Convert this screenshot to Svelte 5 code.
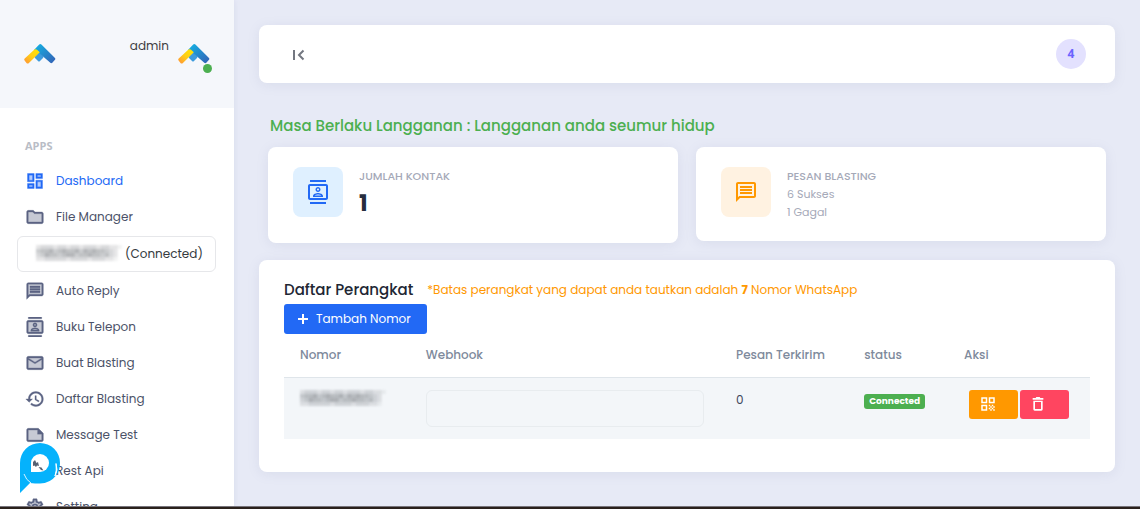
<script>
  const icons = {
    dashboard: {
      soft: 'M5 5h4v6H5zm10 8h4v6h-4zM5 17h4v2H5zM15 5h4v2h-4z',
      line: 'M3 13h8V3H3v10zm2-8h4v6H5V5zM3 21h8v-6H3v6zm2-4h4v2H5v-2zM13 21h8V11h-8v10zm2-8h4v6h-4v-6zM13 3v6h8V3h-8zm6 4h-4V5h4v2z'
    },
    folder: {
      soft: 'M11.17 8l-2-2H4v12h16V8z',
      line: 'M20 6h-8l-2-2H4c-1.1 0-2 .9-2 2v12c0 1.1.9 2 2 2h16c1.1 0 2-.9 2-2V8c0-1.1-.9-2-2-2zm0 12H4V6h5.17l2 2H20v10z'
    },
    chat: {
      soft: 'M4 17.17L5.17 16H20V4H4v13.17z',
      line: 'M20 2H4c-1.1 0-2 .9-2 2v18l4-4h14c1.1 0 2-.9 2-2V4c0-1.1-.9-2-2-2zm0 14H5.17L4 17.17V4h16v12zM6 12h12v2H6zm0-3h12v2H6zm0-3h12v2H6z'
    },
    contacts: {
      soft: 'M4 6v12h16V6z',
      line: 'M20 4H4c-1.1 0-2 .9-2 2v12c0 1.1.9 2 2 2h16c1.1 0 2-.9 2-2V6c0-1.1-.9-2-2-2zm0 14H4V6h16v12zM4 0h16v2H4zm0 22h16v2H4zm8-10c1.38 0 2.5-1.12 2.5-2.5S13.38 7 12 7 9.500 8.120 9.500 9.500 10.620 12 12 12zm0-3.500c.55 0 1 .45 1 1s-.45 1-1 1-1-.45-1-1 .45-1 1-1zm5 7.490C17 13.900 13.690 13 12 13s-5 .9-5 2.990V17h10v-1.010zm-8.190-.490c.61-.52 2.030-1 3.190-1 1.170 0 2.590.48 3.200 1H8.810z'
    },
    mail: {
      soft: 'M20 8l-8 5-8-5v10h16zm0-2H4l8 4.990z',
      line: 'M22 6c0-1.1-.9-2-2-2H4c-1.1 0-2 .9-2 2v12c0 1.1.9 2 2 2h16c1.1 0 2-.9 2-2V6zm-2 0l-8 5-8-5h16zm0 12H4V8l8 5 8-5v10z'
    },
    history: {
      soft: '',
      line: 'M13 3c-4.970 0-9 4.030-9 9H1l3.890 3.890.07.14L9 12H6c0-3.870 3.130-7 7-7s7 3.130 7 7-3.130 7-7 7c-1.930 0-3.680-.79-4.940-2.060l-1.420 1.420C8.270 19.990 10.510 21 13 21c4.970 0 9-4.030 9-9s-4.030-9-9-9zm-1 5v5l4.250 2.520.77-1.280-3.520-2.090V8z'
    },
    note: {
      soft: 'M15 6H4v12h16v-7h-5z',
      line: 'M4 4c-1.100 0-2 .9-2 2v12.010c0 1.100.9 1.990 2 1.990h16c1.100 0 2-.9 2-2v-8l-6-6H4zm16 14H4V6h11v5h5v7z'
    },
    gear: {
      soft: 'M19.280 8.600l-.7-1.210-2.500 1.020-2.100-1.200L13.400 4h-2.800l-.5 3.210-2.100 1.200-2.600-1.020L4.700 8.600l2 1.600v3.600l-2 1.600.7 1.210 2.600-1.020 2.100 1.200.5 3.210h2.800l.5-3.210 2.100-1.200 2.600 1.020.7-1.210-2-1.600v-3.600zM12 16a4 4 0 110-8 4 4 0 010 8z',
      line: 'M19.430 12.980c.04-.32.07-.64.07-.98s-.03-.66-.07-.98l2.110-1.650c.19-.15.24-.42.12-.64l-2-3.460c-.12-.22-.39-.3-.61-.22l-2.490 1c-.52-.4-1.080-.73-1.690-.98l-.38-2.650C14.460 2.180 14.250 2 14 2h-4c-.25 0-.46.18-.49.42l-.38 2.650c-.61.25-1.170.59-1.690.98l-2.490-1c-.23-.09-.49 0-.61.22l-2 3.460c-.13.22-.07.49.12.64l2.110 1.650c-.04.32-.07.65-.07.98s.03.66.07.98l-2.110 1.650c-.19.15-.24.42-.12.64l2 3.460c.12.22.39.3.61.22l2.490-1c.52.4 1.080.73 1.690.98l.38 2.650c.03.24.24.42.49.42h4c.25 0 .46-.18.49-.42l.38-2.650c.61-.25 1.170-.59 1.690-.98l2.490 1c.23.09.49 0 .61-.22l2-3.460c.12-.22.07-.49-.12-.64l-2.110-1.650zm-1.980-1.710c.04.31.05.52.05.73s-.02.43-.05.73l-.14 1.130.89.7 1.080.84-.7 1.210-1.270-.51-1.040-.42-.9.68c-.43.32-.84.56-1.250.73l-1.060.43-.16 1.130-.2 1.350h-1.400l-.19-1.350-.16-1.130-1.060-.43c-.43-.18-.83-.41-1.230-.71l-.91-.7-1.060.43-1.270.51-.7-1.210 1.080-.84.89-.7-.14-1.130c-.03-.31-.05-.54-.05-.74s.02-.43.05-.73l.14-1.130-.89-.7-1.080-.84.7-1.210 1.270.51 1.040.42.9-.68c.43-.32.84-.56 1.250-.73l1.060-.43.16-1.130.2-1.350h1.390l.19 1.350.16 1.130 1.060.43c.43.18.83.41 1.230.71l.91.7 1.060-.43 1.270-.51.7 1.210-1.070.85-.89.7.14 1.130zM12 8a4 4 0 100 8 4 4 0 000-8zm0 6a2 2 0 110-4 2 2 0 010 4z'
    }
  };

  const top = [
    { label: 'Dashboard', icon: 'dashboard', active: true },
    { label: 'File Manager', icon: 'folder' }
  ];
  const rest = [
    { label: 'Auto Reply', icon: 'chat' },
    { label: 'Buku Telepon', icon: 'contacts' },
    { label: 'Buat Blasting', icon: 'mail' },
    { label: 'Daftar Blasting', icon: 'history' },
    { label: 'Message Test', icon: 'note' },
    { label: 'Rest Api', icon: 'folder' },
    { label: 'Setting', icon: 'gear' }
  ];

  // Tones of the tiles that mask a phone number, one row per string.
  const tones = ['23332332332333233221', '45564565564656554320', '34655456645565545320', '22333332333323332210'];
  const tiles = tones.flatMap((row, y) => [...row].map((v, x) => ({ x, y, o: Number(v) / 14 })));
</script>

{#snippet glyph(name, size)}
  <svg width={size} height={size} viewBox="0 0 24 24" fill="currentColor" aria-hidden="true">
    <path d={icons[name].soft} opacity="0.35" />
    <path d={icons[name].line} fill-rule="evenodd" stroke="currentColor" stroke-width="0.4" />
  </svg>
{/snippet}

{#snippet logo(id)}
  <svg width="32" height="22" viewBox="0 0 32 22" aria-hidden="true">
    <defs>
      <linearGradient id="{id}-b" x1="0" y1="0" x2="1" y2="1"><stop offset="0" stop-color="#12b5e5" /><stop offset="1" stop-color="#345fb4" /></linearGradient>
      <linearGradient id="{id}-y" x1="1" y1="0" x2="0" y2="1"><stop offset="0" stop-color="#ffe500" /><stop offset="0.5" stop-color="#ffd014" /><stop offset="1" stop-color="#ff9138" /></linearGradient>
    </defs>
    <path d="M11 13l4-4 4 4q1 1 0 2l-3 3q-1 1-2 0l-3-3q-1-1 0-2z" fill="#3d9bdd" />
    <path d="M10 7l5.200-5.600q1.100-1 2.200 0L31 15q.8 1 0 1.800l-2.700 3q-1 .8-2 0L14.500 9.500z" fill="url(#{id}-b)" />
    <path d="M.7 15.500L10.500 6.600q1.500-1 2.800.3l2.500 2.400L4.700 20.200q-1 .8-2 0L.6 17.600q-.8-1.200.1-2.100z" fill="url(#{id}-y)" />
  </svg>
{/snippet}

{#snippet masked()}
  <svg class="masked" width="86" height="16" viewBox="0 0 20 4" preserveAspectRatio="none" aria-hidden="true">
    {#each tiles as t}<rect x={t.x} y={t.y} width="1" height="1" fill="#4b5057" opacity={t.o} />{/each}
  </svg>
{/snippet}

{#snippet item(entry)}
  <a href="#top" class="item" class:active={entry.active}>{@render glyph(entry.icon, 20)}<span>{entry.label}</span></a>
{/snippet}

<div class="page">
  <div class="shell">
    <aside>
      <div class="profile">
        <a href="#top" class="brand" aria-label="Home">{@render logo('brand')}</a>
        <div class="user">
          <span>admin</span>
          <div class="avatar">{@render logo('avatar')}<i></i></div>
        </div>
      </div>
      <nav>
        <h2>APPS</h2>
        {#each top as entry}{@render item(entry)}{/each}
        <div class="device">
          {@render masked()}
          <select aria-label="Device"><option>(Connected)</option></select>
        </div>
        {#each rest as entry}{@render item(entry)}{/each}
      </nav>
    </aside>

    <main>
      <header class="card bar">
        <button class="collapse" aria-label="Toggle sidebar">
          <svg width="20" height="20" viewBox="0 0 20 20" fill="none" stroke="#737780" stroke-width="2" aria-hidden="true"><path d="M6 6v10M15.500 6.500L11 11l4.500 4.500" /></svg>
        </button>
        <span class="count">4</span>
      </header>

      <h1>Masa Berlaku Langganan : Langganan anda seumur hidup</h1>

      <section class="stats">
        <div class="card stat">
          <div class="tile blue">
            <svg width="24" height="24" viewBox="0 0 24 24" fill="currentColor" aria-hidden="true"><path d={icons.contacts.line} fill-rule="evenodd" /></svg>
          </div>
          <div><h3>JUMLAH KONTAK</h3><strong>1</strong></div>
        </div>
        <div class="card stat">
          <div class="tile orange">
            <svg width="24" height="24" viewBox="0 0 24 24" fill="currentColor" aria-hidden="true"><path d={icons.chat.line} fill-rule="evenodd" /></svg>
          </div>
          <div><h3>PESAN BLASTING</h3><p>6 Sukses</p><p>1 Gagal</p></div>
        </div>
      </section>

      <section class="card devices">
        <div class="heading">
          <h2>Daftar Perangkat</h2>
          <p>*Batas perangkat yang dapat anda tautkan adalah <b>7</b> Nomor WhatsApp</p>
        </div>
        <button class="add">
          <svg width="12" height="12" viewBox="0 0 12 12" stroke="#fff" stroke-width="2" aria-hidden="true"><path d="M6 1v10M1 6h10" /></svg>
          Tambah Nomor
        </button>
        <table>
          <thead>
            <tr><th class="c1">Nomor</th><th class="c2">Webhook</th><th class="c3">Pesan Terkirim</th><th class="c4">status</th><th>Aksi</th></tr>
          </thead>
          <tbody>
            <tr>
              <td>{@render masked()}</td>
              <td><input type="text" aria-label="Webhook" /></td>
              <td>0</td>
              <td><span class="badge">Connected</span></td>
              <td>
                <div class="actions">
                  <button class="qr" aria-label="QR code">
                    <svg width="18" height="18" viewBox="0 0 24 24" fill="currentColor" aria-hidden="true"><path fill-rule="evenodd" d="M3 11h8V3H3v8zm2-6h4v4H5V5zM3 21h8v-8H3v8zm2-6h4v4H5v-4zM13 3v8h8V3h-8zm6 6h-4V5h4v4zM19 19h2v2h-2zM13 13h2v2h-2zM15 15h2v2h-2zM13 17h2v2h-2zM15 19h2v2h-2zM17 17h2v2h-2zM17 13h2v2h-2zM19 15h2v2h-2z" /></svg>
                  </button>
                  <button class="del" aria-label="Delete">
                    <svg width="16" height="16" viewBox="0 0 24 24" fill="currentColor" aria-hidden="true"><path fill-rule="evenodd" d="M5 7v13q0 2 2 2h10q2 0 2-2V7zm2.500 2h9v10.500h-9zM4 3h4.500l1-1.500h5l1 1.500H20v2.500H4z" /></svg>
                  </button>
                </div>
              </td>
            </tr>
          </tbody>
        </table>
      </section>
    </main>
  </div>
  <footer></footer>

  <button class="widget" aria-label="Chat">
    <svg width="40" height="50" viewBox="0 0 40 50" aria-hidden="true">
      <path d="M0 50V20a20 20 0 0140 0q0 7-3.500 12Q30 40.500 20 40.500q-5 0-10-.5z" fill="#05b2fc" />
      <path d="M4 31q2 6 7 9" fill="none" stroke="#d9f2ff" />
      <path d="M36 20.500q1 7-1 12.500 3.500-6 1-12.500z" fill="#fff" stroke="#fff" />
      <circle cx="20" cy="20" r="9" fill="#fff" />
      <path d="M11 20v9h9z" fill="#fff" />
      <path d="M13 23v-4l2-2 1.500 3 1.500-1 1 4-2-.5-1 1.500-1.500-1.500zM18.500 24l3 .5 2 3-2.500-.5z" fill="#566273" />
    </svg>
  </button>
</div>

<style>
  :global(body) { margin: 0; background: #e7eaf6; }
  * { box-sizing: border-box; }
  .page {
    position: relative;
    display: flex;
    flex-direction: column;
    height: 100vh;
    overflow: hidden;
    font: 12px/20px Poppins, Inter, sans-serif;
    color: #40475c;
  }
  h1, h2, h3, p { margin: 0; }
  button, input, select { font: inherit; }
  button { border: 0; padding: 0; cursor: pointer; }
  svg { display: block; flex: none; }
  .shell { display: flex; flex: 1; min-height: 0; }
  footer { height: 3px; background: #2a211c; border-top: 1px solid #77747b; }

  aside { width: 234px; flex: none; background: #fff; overflow: hidden; box-shadow: 0 0 6px rgba(120, 130, 180, 0.15); }
  .profile {
    display: flex;
    justify-content: space-between;
    align-items: center;
    height: 108px;
    padding: 0 24px;
    background: #f5f7fb;
  }
  .user { display: flex; align-items: flex-start; gap: 9px; }
  .user span { margin-top: -7px; color: #3e3e42; }
  .avatar { position: relative; }
  .avatar i { position: absolute; right: -2px; bottom: -8px; width: 9px; height: 9px; border-radius: 50%; background: #4caf50; }
  nav { padding-top: 28px; }
  nav h2 { padding-left: 25px; margin-bottom: 7px; font: 700 11px/20px "Open Sans", sans-serif; color: #b9bdc6; }
  .item { display: flex; align-items: center; gap: 11px; height: 36px; padding-left: 25px; color: #5b6383; text-decoration: none; }
  .item span { color: #4b5268; }
  .item.active, .item.active span { color: #2269f5; }
  .masked { filter: blur(1px); }
  .device { position: relative; margin: 1px 18px 1px 17px; }
  .device .masked { position: absolute; left: 19px; top: 9px; pointer-events: none; }
  select {
    display: block;
    appearance: none;
    width: 100%;
    height: 36px;
    padding: 0 0 0 107px;
    border: 1px solid #e6e7ea;
    border-radius: 6px;
    background: #fff;
    color: #343a40;
  }

  main { flex: 1; min-width: 0; padding: 25px; }
  .card { background: #fff; border-radius: 8px; box-shadow: 0 2px 12px rgba(120, 130, 170, 0.13); }
  .bar { display: flex; align-items: center; justify-content: space-between; height: 58px; padding: 0 29px; }
  .collapse { background: none; }
  .count { width: 30px; height: 30px; border-radius: 50%; background: #e3e1fe; color: #6c63ff; font: 700 12px/30px "Open Sans", sans-serif; text-align: center; }
  h1 { margin: 32px 0 10px 11px; font-size: 15px; line-height: 22px; font-weight: 500; color: #4caf50; }
  .stats { display: grid; grid-template-columns: 1fr 1fr; align-items: start; gap: 18px; padding: 0 9px; }
  .stat { display: flex; gap: 16px; height: 96px; padding: 20px 25px; }
  .stat + .stat { height: 94px; }
  .tile { display: grid; place-items: center; width: 50px; height: 50px; border-radius: 8px; flex: none; }
  .blue { background: #dff0ff; color: #2269f5; }
  .orange { background: #fff2e1; color: #ff9800; }
  .stat h3, .stat p { font-size: 11px; line-height: 18px; color: #a5a9b8; }
  .stat h3 { font-weight: 500; }
  .stat strong { display: block; font-size: 23px; line-height: 36px; color: #262d3d; }

  .devices { margin-top: 17px; padding: 19px 25px 33px; }
  .heading { display: flex; align-items: center; gap: 14px; height: 22px; margin-bottom: 3px; }
  .heading h2 { font-size: 15px; font-weight: 500; color: #212633; }
  .heading p { color: #ff9800; }
  .add { display: flex; align-items: center; gap: 7px; height: 30px; padding: 0 16px 0 13px; border-radius: 3px; background: #2269f5; color: #fff; }
  table { width: 100%; table-layout: fixed; border-collapse: collapse; }
  th { height: 43px; padding: 0 16px; border-bottom: 1px solid #dfe5ea; text-align: left; font-weight: 500; color: #7e8a9c; white-space: nowrap; }
  .c1 { width: 15.6%; }
  .c2 { width: 38.500%; }
  .c3 { width: 15.900%; }
  .c4 { width: 12.400%; }
  tbody tr { height: 62px; background: #f3f6f9; }
  td { padding: 12px 16px; vertical-align: top; }
  input { display: block; width: 100%; height: 37px; border: 1px solid #e8ecef; border-radius: 6px; background: transparent; }
  .badge { display: block; width: 61px; height: 15px; margin-top: 4px; border-radius: 3px; background: #4caf50; color: #fff; font-size: 9px; line-height: 15px; font-weight: 700; text-align: center; }
  .actions { display: flex; gap: 2px; margin-left: 5px; }
  .actions button { display: flex; align-items: center; width: 49px; height: 29px; padding-left: 10px; border-radius: 3px; color: #fff; flex: none; }
  .qr { background: #ff9800; }
  .del { background: #ff4560; }
  .widget { position: absolute; left: 20px; top: 443px; background: none; }
</style>
